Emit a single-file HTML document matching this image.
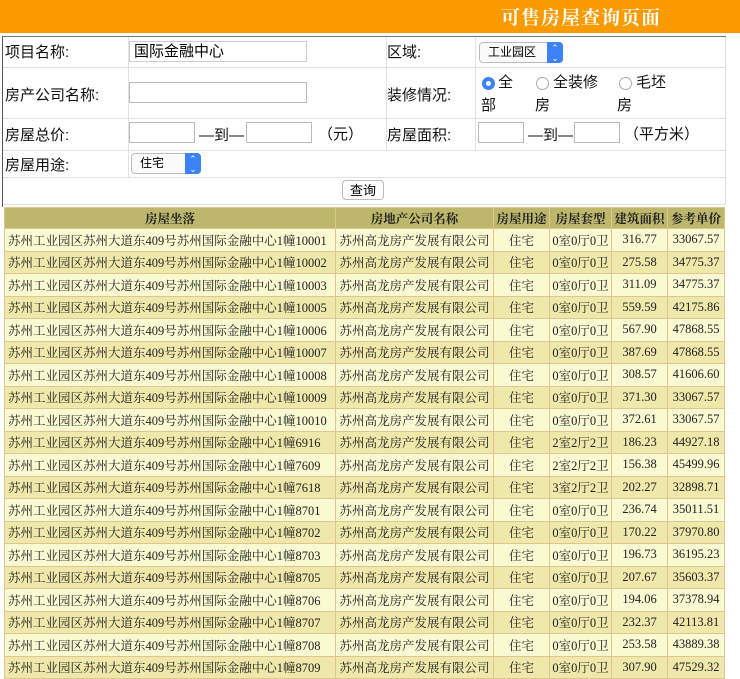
<!DOCTYPE html>
<html><head><meta charset="utf-8"><style>
body{margin:0;width:740px;height:679px;overflow:hidden;background:#fff;font-family:"Liberation Sans","Noto Sans CJK SC",sans-serif;position:relative}
.hd{position:absolute;left:0;top:0;width:740px;height:33px;background:#f99a00}
.hd span{position:absolute;left:501px;top:3px;color:#fff;font-size:19px;font-weight:bold;font-family:"Liberation Serif","Noto Serif CJK SC",serif;letter-spacing:1px}
.form{position:absolute;left:2px;top:36px;width:723px;height:170px;border-left:1px solid #555;border-top:1px solid #777}
.l{position:absolute;font-size:15px;color:#111;margin-top:-2px}
.in{position:absolute;height:21px;border:1px solid #bbb;background:#fff;box-sizing:border-box;font-size:15px;padding-left:4px;line-height:19px}
.hl{position:absolute;height:1px;background:#e2e2e2}
.vl{position:absolute;width:1px;background:#e2e2e2}
.sel{position:absolute;height:21px;border:1px solid #bbb;border-radius:4px;background:#fafafa;font-size:12px;line-height:19px;padding-left:8px;box-sizing:border-box}
.sel i{position:absolute;right:-1px;top:-1px;width:16px;height:21px;background:#3b82f6;border-radius:0 4px 4px 0;color:#fff;font-style:normal;font-size:9px;text-align:center;line-height:10px;padding-top:1px;box-sizing:border-box}
.rad{position:absolute;width:13px;height:13px;border:1px solid #aaa;border-radius:50%;box-sizing:border-box;background:#fff}
.btn{position:absolute;left:342px;top:180px;width:42px;height:20px;border:1px solid #bbb;border-radius:4px;font-size:13px;text-align:center;line-height:19px;box-sizing:border-box;background:#fff}
table{position:absolute;left:4px;top:207px;border-collapse:collapse;font-family:"Liberation Serif","Noto Serif CJK SC",serif;font-size:12.5px;color:#222}
td,th{border:1px solid #e0c590;padding:0;height:21.5px;white-space:nowrap;text-align:center}
th{background:#bdb76b;font-weight:bold;height:20px}
tr.a td{background:#fafad2}
tr.b td{background:#eee8aa}
td:first-child{text-align:left;padding-left:3px}
</style></head><body>
<div class="hd"><span>可售房屋查询页面</span></div>
<div class="form">
<div class="hl" style="left:0;top:30px;width:723px"></div>
<div class="hl" style="left:0;top:81px;width:723px"></div>
<div class="hl" style="left:0;top:113px;width:723px"></div>
<div class="hl" style="left:0;top:140px;width:723px"></div>
<div class="hl" style="left:0;top:167px;width:723px"></div>
<div class="vl" style="left:125px;top:0;height:140px"></div>
<div class="vl" style="left:383px;top:0;height:113px"></div>
<div class="vl" style="left:472px;top:0;height:113px"></div>
<div class="vl" style="left:722px;top:0;height:167px"></div>
</div>
<div class="l" style="left:5px;top:43px">项目名称:</div>
<div class="in" style="left:129px;top:41px;width:178px;border-color:#ccc">国际金融中心</div>
<div class="l" style="left:387px;top:43px">区域:</div>
<div class="sel" style="left:479px;top:42px;width:84px">工业园区<i>⌃<br>⌄</i></div>
<div class="l" style="left:5px;top:86px">房产公司名称:</div>
<div class="in" style="left:129px;top:82px;width:178px"></div>
<div class="l" style="left:387px;top:86px">装修情况:</div>
<div class="rad" style="left:482px;top:77px;border:4px solid #3b82f6"></div>
<div class="l" style="left:498px;top:73px">全</div>
<div class="l" style="left:481px;top:96px">部</div>
<div class="rad" style="left:536px;top:77px"></div>
<div class="l" style="left:553px;top:73px">全装修</div>
<div class="l" style="left:535px;top:96px">房</div>
<div class="rad" style="left:619px;top:77px"></div>
<div class="l" style="left:636px;top:73px">毛坯</div>
<div class="l" style="left:617px;top:96px">房</div>
<div class="l" style="left:5px;top:126px">房屋总价:</div>
<div class="in" style="left:129px;top:122px;width:66px"></div>
<div class="l" style="left:199px;top:126px">—到—</div>
<div class="in" style="left:246px;top:122px;width:66px"></div>
<div class="l" style="left:318px;top:125px">（元）</div>
<div class="l" style="left:387px;top:126px">房屋面积:</div>
<div class="in" style="left:478px;top:122px;width:46px"></div>
<div class="l" style="left:528px;top:126px">—到—</div>
<div class="in" style="left:574px;top:122px;width:46px"></div>
<div class="l" style="left:624px;top:125px">（平方米）</div>
<div class="l" style="left:5px;top:156px">房屋用途:</div>
<div class="sel" style="left:131px;top:153px;width:70px">住宅<i>⌃<br>⌄</i></div>
<div class="btn">查询</div>
<table>
<tr><th style="width:330px">房屋坐落</th><th style="width:157px">房地产公司名称</th><th style="width:55px">房屋用途</th><th style="width:61px">房屋套型</th><th style="width:55px">建筑面积</th><th style="width:56px">参考单价</th></tr>
<tr class="a"><td>苏州工业园区苏州大道东409号苏州国际金融中心1幢10001</td><td>苏州高龙房产发展有限公司</td><td>住宅</td><td>0室0厅0卫</td><td>316.77</td><td>33067.57</td></tr>
<tr class="b"><td>苏州工业园区苏州大道东409号苏州国际金融中心1幢10002</td><td>苏州高龙房产发展有限公司</td><td>住宅</td><td>0室0厅0卫</td><td>275.58</td><td>34775.37</td></tr>
<tr class="a"><td>苏州工业园区苏州大道东409号苏州国际金融中心1幢10003</td><td>苏州高龙房产发展有限公司</td><td>住宅</td><td>0室0厅0卫</td><td>311.09</td><td>34775.37</td></tr>
<tr class="b"><td>苏州工业园区苏州大道东409号苏州国际金融中心1幢10005</td><td>苏州高龙房产发展有限公司</td><td>住宅</td><td>0室0厅0卫</td><td>559.59</td><td>42175.86</td></tr>
<tr class="a"><td>苏州工业园区苏州大道东409号苏州国际金融中心1幢10006</td><td>苏州高龙房产发展有限公司</td><td>住宅</td><td>0室0厅0卫</td><td>567.90</td><td>47868.55</td></tr>
<tr class="b"><td>苏州工业园区苏州大道东409号苏州国际金融中心1幢10007</td><td>苏州高龙房产发展有限公司</td><td>住宅</td><td>0室0厅0卫</td><td>387.69</td><td>47868.55</td></tr>
<tr class="a"><td>苏州工业园区苏州大道东409号苏州国际金融中心1幢10008</td><td>苏州高龙房产发展有限公司</td><td>住宅</td><td>0室0厅0卫</td><td>308.57</td><td>41606.60</td></tr>
<tr class="b"><td>苏州工业园区苏州大道东409号苏州国际金融中心1幢10009</td><td>苏州高龙房产发展有限公司</td><td>住宅</td><td>0室0厅0卫</td><td>371.30</td><td>33067.57</td></tr>
<tr class="a"><td>苏州工业园区苏州大道东409号苏州国际金融中心1幢10010</td><td>苏州高龙房产发展有限公司</td><td>住宅</td><td>0室0厅0卫</td><td>372.61</td><td>33067.57</td></tr>
<tr class="b"><td>苏州工业园区苏州大道东409号苏州国际金融中心1幢6916</td><td>苏州高龙房产发展有限公司</td><td>住宅</td><td>2室2厅2卫</td><td>186.23</td><td>44927.18</td></tr>
<tr class="a"><td>苏州工业园区苏州大道东409号苏州国际金融中心1幢7609</td><td>苏州高龙房产发展有限公司</td><td>住宅</td><td>2室2厅2卫</td><td>156.38</td><td>45499.96</td></tr>
<tr class="b"><td>苏州工业园区苏州大道东409号苏州国际金融中心1幢7618</td><td>苏州高龙房产发展有限公司</td><td>住宅</td><td>3室2厅2卫</td><td>202.27</td><td>32898.71</td></tr>
<tr class="a"><td>苏州工业园区苏州大道东409号苏州国际金融中心1幢8701</td><td>苏州高龙房产发展有限公司</td><td>住宅</td><td>0室0厅0卫</td><td>236.74</td><td>35011.51</td></tr>
<tr class="b"><td>苏州工业园区苏州大道东409号苏州国际金融中心1幢8702</td><td>苏州高龙房产发展有限公司</td><td>住宅</td><td>0室0厅0卫</td><td>170.22</td><td>37970.80</td></tr>
<tr class="a"><td>苏州工业园区苏州大道东409号苏州国际金融中心1幢8703</td><td>苏州高龙房产发展有限公司</td><td>住宅</td><td>0室0厅0卫</td><td>196.73</td><td>36195.23</td></tr>
<tr class="b"><td>苏州工业园区苏州大道东409号苏州国际金融中心1幢8705</td><td>苏州高龙房产发展有限公司</td><td>住宅</td><td>0室0厅0卫</td><td>207.67</td><td>35603.37</td></tr>
<tr class="a"><td>苏州工业园区苏州大道东409号苏州国际金融中心1幢8706</td><td>苏州高龙房产发展有限公司</td><td>住宅</td><td>0室0厅0卫</td><td>194.06</td><td>37378.94</td></tr>
<tr class="b"><td>苏州工业园区苏州大道东409号苏州国际金融中心1幢8707</td><td>苏州高龙房产发展有限公司</td><td>住宅</td><td>0室0厅0卫</td><td>232.37</td><td>42113.81</td></tr>
<tr class="a"><td>苏州工业园区苏州大道东409号苏州国际金融中心1幢8708</td><td>苏州高龙房产发展有限公司</td><td>住宅</td><td>0室0厅0卫</td><td>253.58</td><td>43889.38</td></tr>
<tr class="b"><td>苏州工业园区苏州大道东409号苏州国际金融中心1幢8709</td><td>苏州高龙房产发展有限公司</td><td>住宅</td><td>0室0厅0卫</td><td>307.90</td><td>47529.32</td></tr>
</table>
</body></html>
